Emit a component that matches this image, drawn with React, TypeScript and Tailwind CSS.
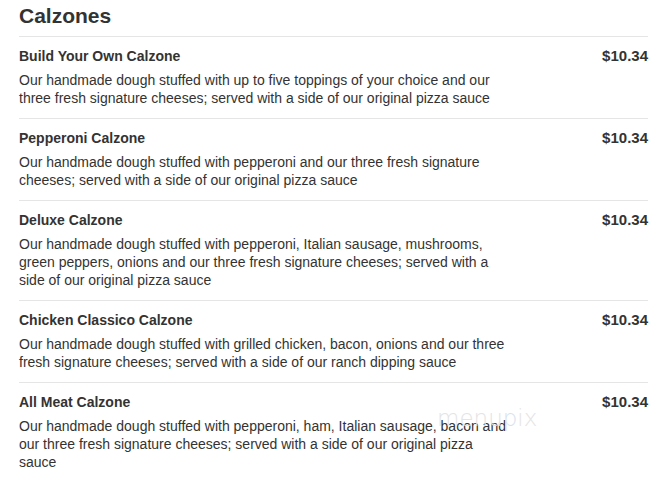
import React from 'react';

const items = [
  {
    name: 'Build Your Own Calzone',
    price: '$10.34',
    desc: 'Our handmade dough stuffed with up to five toppings of your choice and our three fresh signature cheeses; served with a side of our original pizza sauce',
  },
  {
    name: 'Pepperoni Calzone',
    price: '$10.34',
    desc: 'Our handmade dough stuffed with pepperoni and our three fresh signature cheeses; served with a side of our original pizza sauce',
  },
  {
    name: 'Deluxe Calzone',
    price: '$10.34',
    desc: 'Our handmade dough stuffed with pepperoni, Italian sausage, mushrooms, green peppers, onions and our three fresh signature cheeses; served with a side of our original pizza sauce',
  },
  {
    name: 'Chicken Classico Calzone',
    price: '$10.34',
    desc: 'Our handmade dough stuffed with grilled chicken, bacon, onions and our three fresh signature cheeses; served with a side of our ranch dipping sauce',
  },
  {
    name: 'All Meat Calzone',
    price: '$10.34',
    desc: 'Our handmade dough stuffed with pepperoni, ham, Italian sausage, bacon and our three fresh signature cheeses; served with a side of our original pizza sauce',
  },
];

const App: React.FC = () => {
  return (
    <div className="relative min-h-[503px] w-[668px] bg-white pl-[19px] pr-[20px] text-[#333] font-['Liberation_Sans',Arial,sans-serif]">
      {/* Section title */}
      <h2 className="pt-[3px] pb-[7px] text-[21px] font-bold leading-[26px]">Calzones</h2>

      <div>
        {items.map((item) => (
          <div key={item.name} className="flex justify-between border-t border-[#e5e5e5] pt-[10px] pb-[11px]">
            <div className="w-[490px]">
              <div className="text-[14px] font-bold leading-[18px]">{item.name}</div>
              <p className="mt-[6px] text-[14px] leading-[18px]">{item.desc}</p>
            </div>
            <div className="text-[15px] font-bold leading-[18px]">{item.price}</div>
          </div>
        ))}
      </div>

      {/* Watermark */}
      <div className="pointer-events-none absolute left-[437px] top-[405px] text-[23px] leading-[26px] text-[#e4e4e4] font-['DejaVu_Sans',sans-serif] font-light">
        menu<span className="text-[#d8e3ee]">p</span>ix
      </div>
    </div>
  );
};

export default App;
